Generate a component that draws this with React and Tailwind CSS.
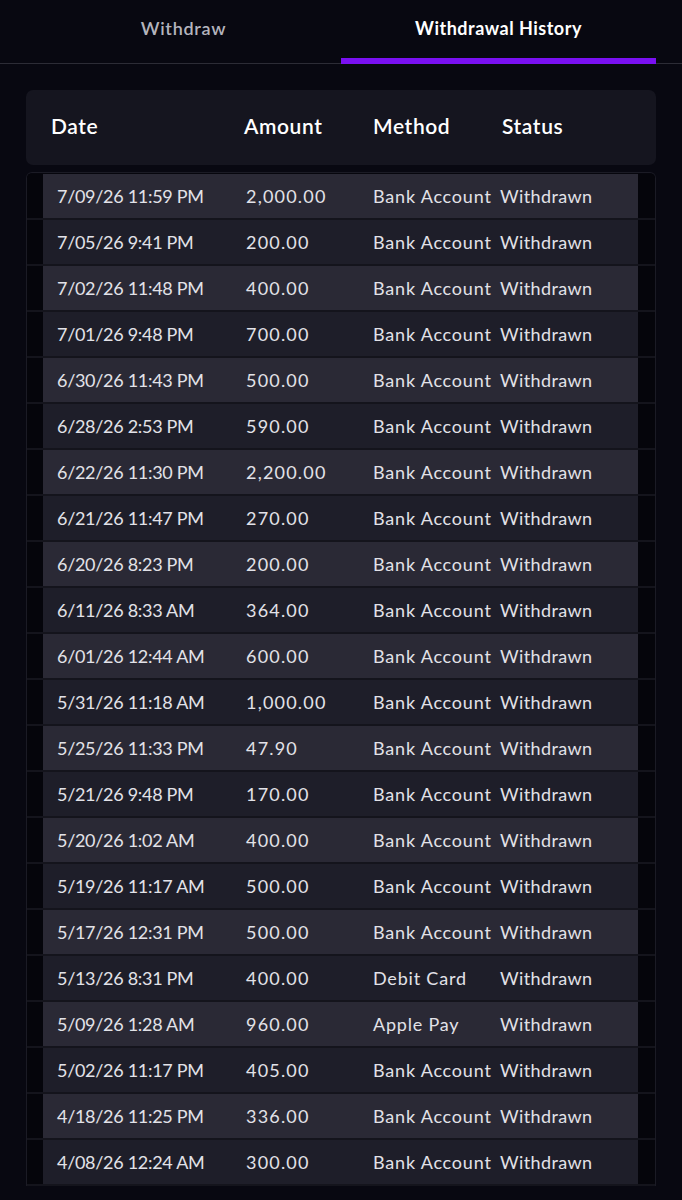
const rows = [
  ['7/09/26 11:59 PM', '2,000.00', 'Bank Account'],
  ['7/05/26 9:41 PM', '200.00', 'Bank Account'],
  ['7/02/26 11:48 PM', '400.00', 'Bank Account'],
  ['7/01/26 9:48 PM', '700.00', 'Bank Account'],
  ['6/30/26 11:43 PM', '500.00', 'Bank Account'],
  ['6/28/26 2:53 PM', '590.00', 'Bank Account'],
  ['6/22/26 11:30 PM', '2,200.00', 'Bank Account'],
  ['6/21/26 11:47 PM', '270.00', 'Bank Account'],
  ['6/20/26 8:23 PM', '200.00', 'Bank Account'],
  ['6/11/26 8:33 AM', '364.00', 'Bank Account'],
  ['6/01/26 12:44 AM', '600.00', 'Bank Account'],
  ['5/31/26 11:18 AM', '1,000.00', 'Bank Account'],
  ['5/25/26 11:33 PM', '47.90', 'Bank Account'],
  ['5/21/26 9:48 PM', '170.00', 'Bank Account'],
  ['5/20/26 1:02 AM', '400.00', 'Bank Account'],
  ['5/19/26 11:17 AM', '500.00', 'Bank Account'],
  ['5/17/26 12:31 PM', '500.00', 'Bank Account'],
  ['5/13/26 8:31 PM', '400.00', 'Debit Card'],
  ['5/09/26 1:28 AM', '960.00', 'Apple Pay'],
  ['5/02/26 11:17 PM', '405.00', 'Bank Account'],
  ['4/18/26 11:25 PM', '336.00', 'Bank Account'],
  ['4/08/26 12:24 AM', '300.00', 'Bank Account'],
];

export default function App() {
  return (
    <div className="min-h-[1200px] bg-[#080811] font-['Lato',sans-serif] text-white">
      {/* tabs */}
      <div className="relative border-b border-[#2c2c36] px-[26px]">
        <div className="flex">
          <button className="h-[63px] w-[315px] pb-[7px] text-[18px] font-semibold tracking-[0.7px] text-[#b4b4bd]">Withdraw</button>
          <button className="relative h-[63px] w-[315px] pb-[7px] text-[18px] font-bold tracking-[0.5px] text-white">
            Withdrawal History
            <span className="absolute bottom-[-1px] left-0 h-[6px] w-full bg-[#7a10f2]" />
          </button>
        </div>
      </div>

      <div className="px-[26px] pt-[26px]">
        {/* header card */}
        <div className="grid h-[75px] grid-cols-[193px_129px_129px_1fr] items-center rounded-[7px] bg-[#15151f] pb-[3px] pl-[25px] text-[21px] font-semibold tracking-[0.6px]">
          <div>Date</div>
          <div>Amount</div>
          <div>Method</div>
          <div>Status</div>
        </div>

        {/* body */}
        <div className="mt-[7px] overflow-hidden rounded-t-[6px] border border-b-0 border-[#1b1b25] bg-[#06060d] pt-[1px]">
          {rows.map(([date, amount, method], i) => (
            <div key={i} className="flex border-b-2 border-[#14141c]">
              <div className="w-[16px] bg-[#05050b]" />
              <div
                className={`grid h-[44px] flex-1 grid-cols-[189px_127px_127px_1fr] items-center pl-[14px] text-[18px] font-normal text-[#e2e2e8] ${
                  i % 2 === 0 ? 'bg-[#2a2935]' : 'bg-[#1e1e29]'
                }`}
              >
                <div className="whitespace-nowrap tracking-[-0.3px]">{date}</div>
                <div className="tracking-[1.2px]">{amount}</div>
                <div className="whitespace-nowrap tracking-[0.8px]">{method}</div>
                <div className="tracking-[0.4px]">Withdrawn</div>
              </div>
              <div className="w-[17px] bg-[#05050b]" />
            </div>
          ))}
        </div>
      </div>
    </div>
  );
}
